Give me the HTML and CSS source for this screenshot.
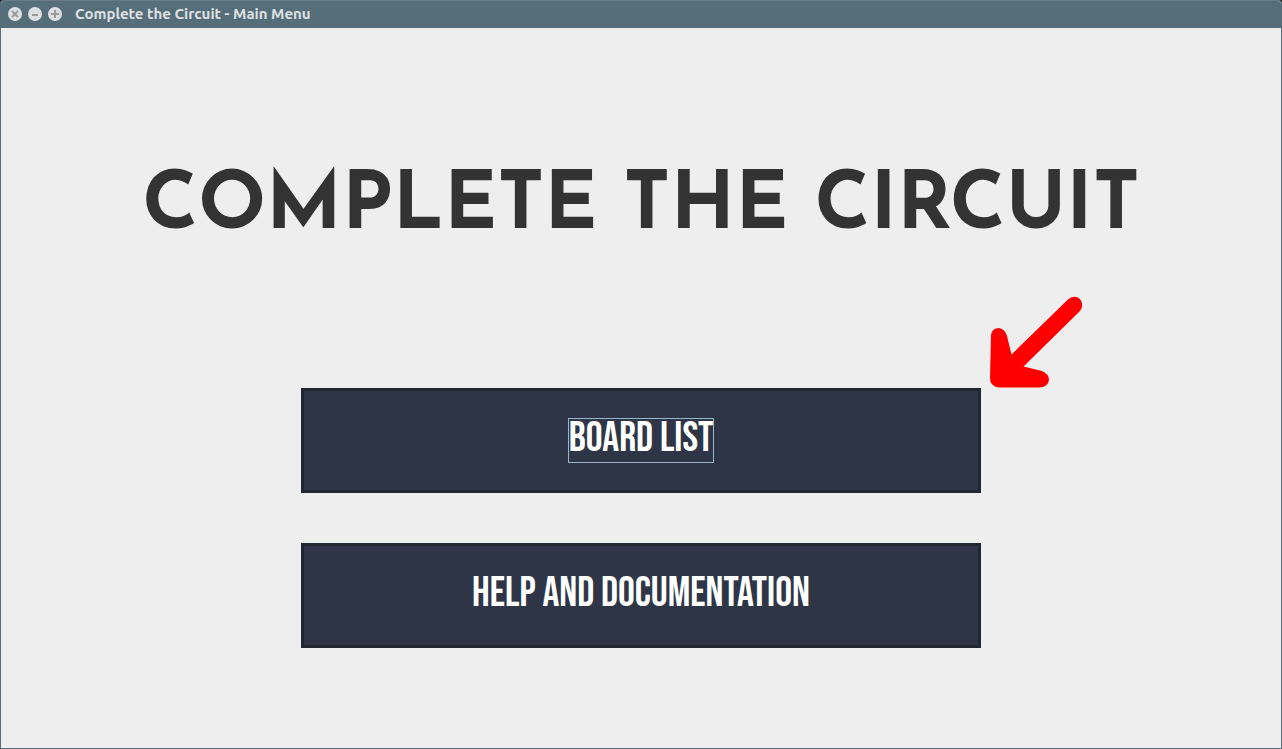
FILE: index.html
```html
<!DOCTYPE html>
<html lang="en">
<head>
<meta charset="utf-8">
<title>Complete the Circuit - Main Menu</title>
<link rel="stylesheet" href="styles.css">
</head>
<body>
<div class="window">
  <header class="titlebar">
    <div class="controls">
      <button class="control" type="button" aria-label="Close"><svg viewBox="0 0 14 14"><path d="M4 4l6 6M10 4l-6 6"/></svg></button>
      <button class="control" type="button" aria-label="Minimize"><svg viewBox="0 0 14 14"><path d="M4 8h6"/></svg></button>
      <button class="control" type="button" aria-label="Maximize"><svg viewBox="0 0 14 14"><path d="M3 7h8M7 3v8"/></svg></button>
    </div>
    <span class="caption">Complete the Circuit - Main Menu</span>
  </header>
  <main class="content">
    <h1 class="title">COMPLETE THE CIRCUIT</h1>
    <nav class="menu">
      <button class="menu-button" type="button"><span class="label focused">BOARD LIST</span></button>
      <button class="menu-button" type="button"><span class="label">HELP AND DOCUMENTATION</span></button>
      <svg class="arrow" viewBox="0 0 94 92" aria-hidden="true"><path d="M79.500 3Q84-.5 89 1.500Q94 5 93 11Q92 14 90 16L34.500 70.500L53 75Q60 78 60 84Q59 91 51 91.500L9 91.500Q1 90 1 82L2 39Q3 32 10 32Q16 33 18 40L22.500 58.500Z"/></svg>
    </nav>
  </main>
</div>
</body>
</html>
```
FILE: styles.css
```css
* { box-sizing: border-box; }

body {
  margin: 0;
  background: #1c1c1c;
}

.window {
  display: flex;
  flex-direction: column;
  min-height: 100vh;
  border: 1px solid #566e79;
  border-top-color: #667d87;
  border-radius: 4px 4px 0 0;
  background: #eeeeee;
  overflow: hidden;
}

.titlebar {
  display: flex;
  align-items: center;
  gap: 13px;
  height: 27px;
  padding: 0 7px 1px;
  background: #566e79;
}

.controls {
  display: flex;
  gap: 6px;
}

.control {
  width: 14px;
  height: 14px;
  padding: 0;
  border: 0;
  border-radius: 50%;
  background: #dddfe2;
}

.control svg {
  display: block;
  fill: none;
  stroke: #999a9c;
  stroke-width: 2;
}

.caption {
  color: #dfe1e5;
  font: bold 15px/20px "Ubuntu", "Noto Sans", sans-serif;
}

.content {
  display: flex;
  flex: 1;
  flex-direction: column;
  align-items: center;
  gap: 130px;
  padding: 130px 24px 100px;
}

.title {
  margin: 0;
  color: #333333;
  font: bold 80px/100px "Josefin Sans", "Lato", sans-serif;
  text-align: center;
}

.menu {
  position: relative;
  display: flex;
  flex-direction: column;
  gap: 50px;
  width: 100%;
  max-width: 680px;
}

.menu-button {
  display: flex;
  align-items: center;
  justify-content: center;
  min-height: 105px;
  padding: 0;
  border: 3px solid #212833;
  background: #2e3546;
  color: #ffffff;
  font: 42px/36px "Bebas Neue", "Roboto Condensed", "Liberation Sans Narrow", sans-serif;
}

.label {
  padding: 2px 0 5px;
  border: 1px solid transparent;
}

.focused { border-color: #9ab4cb; }

.arrow {
  position: absolute;
  top: -92px;
  right: -102px;
  width: 94px;
  height: 92px;
  fill: #ff0000;
}
```
